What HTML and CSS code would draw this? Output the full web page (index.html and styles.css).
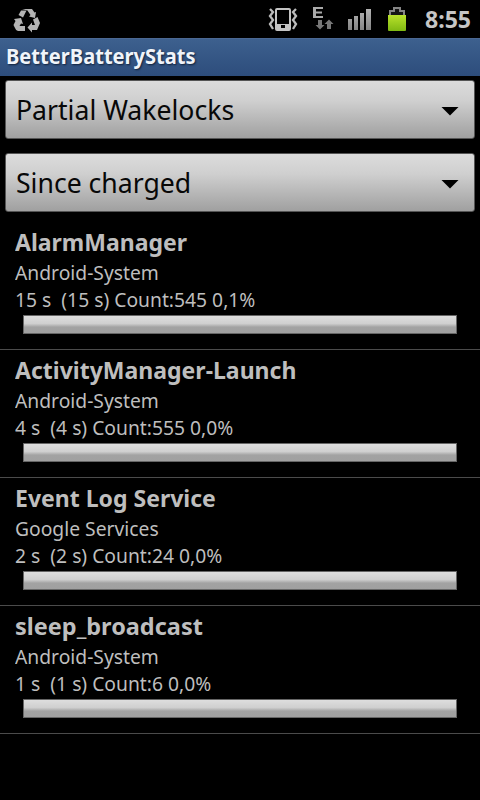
FILE: index.html
```html
<!DOCTYPE html>
<html lang="en">
<head>
<meta charset="utf-8">
<title>BetterBatteryStats</title>
<link rel="stylesheet" href="styles.css">
</head>
<body>
<header class="status">
  <svg class="recycle" width="28" height="26" viewBox="13 8 28 26" fill="#b4b4b4">
    <path d="M22 9h10l2.500 3.500 1.500-.5-1 6-6-1.500 1.500-1.500-3-4.500z"/>
    <path d="M21 10.500l5.500 0-3.500 7-4.500-2.500z"/>
    <path d="M14 19l7-1 2 6-2-.5-1.500 2.500h5.500v5h-7q-2 0-3-3l-1.500-3 2-4z"/>
    <path d="M33 19.500l4.500-2.500 2.500 6-3 7h-5v2.500l-4.500-5 4.500-5v2.500h3z"/>
  </svg>
  <svg class="indicators" width="140" height="38" viewBox="268 0 140 38">
    <g fill="none" stroke="#bcbcbc" stroke-width="2.300">
      <path d="M270 9l3 3-3 4 3 4-3 4 3 5M296 9l-3 3 3 4-3 4 3 4-3 5"/>
    </g>
    <path fill="#c4c4c4" fill-rule="evenodd" d="M277 8h12q2 0 2 2v19q0 2-2 2h-12q-2 0-2-2V10q0-2 2-2zm0 2v14h12V10zm4 15v3h4v-3z"/>
    <path fill="#aaa" d="M313 7h10v2h-7v2.500h6v2h-6V16h7v2h-10z"/>
    <path fill="#777" d="M318 20h4v5h2.500l-4.500 4.500-4.500-4.500h2.500zM327 29h4v-5h2.500L329 19.500 324.500 24h2.500z"/>
    <g fill="url(#sig)"><path d="M348 19h4v11h-4zM354 16h4v14h-4zM360 13h4v17h-4zM366 9h5v21h-5z"/></g>
    <path fill="#858585" d="M393 7h8v3h4v6h-16v-6h4z"/>
    <path fill="#161616" d="M395 9h4v3h4v4h-12v-4h4z"/>
    <path fill="url(#charge)" d="M388 15h18v15q0 1-1 1h-16q-1 0-1-1z"/>
    <defs>
      <linearGradient id="sig" x1="0" y1="0" x2="0" y2="1"><stop stop-color="#b4b4b4"/><stop offset="1" stop-color="#858585"/></linearGradient>
      <linearGradient id="charge" x1="0" y1="0" x2="0" y2="1"><stop stop-color="#b9e22c"/><stop offset="1" stop-color="#7fb812"/></linearGradient>
    </defs>
  </svg>
  <span class="clock">8:55</span>
</header>
<h1 class="titlebar"><span>BetterBatteryStats</span></h1>
<main>
  <div class="spinner"><span>Partial Wakelocks</span><i class="arrow"></i></div>
  <div class="spinner"><span>Since charged</span><i class="arrow"></i></div>
  <ul class="list">
    <li><h2>AlarmManager</h2><p>Android-System</p><p>15 s&nbsp; (15 s) Count:545 0,1%</p><div class="bar"></div></li>
    <li><h2>ActivityManager-Launch</h2><p>Android-System</p><p>4 s&nbsp; (4 s) Count:555 0,0%</p><div class="bar"></div></li>
    <li><h2>Event Log Service</h2><p>Google Services</p><p>2 s&nbsp; (2 s) Count:24 0,0%</p><div class="bar"></div></li>
    <li><h2 class="wide">sleep_broadcast</h2><p>Android-System</p><p>1 s&nbsp; (1 s) Count:6 0,0%</p><div class="bar"></div></li>
  </ul>
</main>
</body>
</html>
```
FILE: styles.css
```css
* { box-sizing: border-box; margin: 0; padding: 0; }
body { width: 480px; height: 800px; overflow: hidden; background: #000; font-family: "Noto Sans", sans-serif; }
.status { height: 38px; display: flex; align-items: flex-start; }
.recycle { margin: 8px 0 0 13px; }
.indicators { margin-left: 227px; }
.clock { margin-left: 17px; color: #c6c6c6; font-size: 24px; font-weight: 700; line-height: 38px; transform: scaleX(.96); transform-origin: left; white-space: nowrap; }
.titlebar { height: 38px; padding-left: 6px; border-top: 1px solid #4b6893; background: linear-gradient(#3d608e, #2d4d7c); color: #f0f4fa; font-size: 20.5px; line-height: 35px; text-shadow: 1px 1px 2px #10203a; }
.titlebar span { display: inline-block; transform: scaleX(.98); transform-origin: left; }
.spinner { display: flex; align-items: center; justify-content: space-between; height: 59px; margin: 4px 5px 14px; padding: 0 15px 1px 10px; border: 1px solid #555; border-radius: 3px; background: linear-gradient(#dcdcdc, #cfcfcf 35%, #a0a0a0); color: #080808; font-size: 28px; }
.spinner + .spinner { margin-bottom: 11px; }
.spinner span { transform: scaleX(.95); transform-origin: left; }
.arrow { width: 18px; height: 9px; margin-top: 4px; background: #000; clip-path: polygon(0 0, 100% 0, 50% 100%); }
.list { list-style: none; margin-top: -1px; }
.list li { height: 128px; padding: 6px 15px 0; border-bottom: 1px solid #4b4b4b; color: #bebebe; }
.list h2 { height: 31px; font-size: 24px; line-height: 28px; transform: scaleX(.959); transform-origin: left; }
.list .wide { transform: scaleX(.978); }
.list p { font-size: 20px; line-height: 27px; transform: scaleX(.964); transform-origin: left; }
.bar { height: 19px; margin: 2px 8px 0; border: 1px solid #666; background: linear-gradient(#dedede, #cfcfcf 45%, #a2a2a2 65%, #a0a0a0); }
```
